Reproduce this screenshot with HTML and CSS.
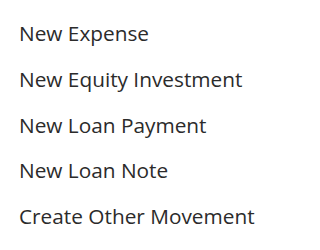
FILE: index.html
```html
<!DOCTYPE html>
<html>
<head>
<meta charset="utf-8">
<link rel="stylesheet" href="styles.css">
</head>
<body>
<ul class="menu">
  <li class="menu-item">New Expense</li>
  <li class="menu-item">New Equity Investment</li>
  <li class="menu-item">New Loan Payment</li>
  <li class="menu-item">New Loan Note</li>
  <li class="menu-item">Create Other Movement</li>
</ul>
</body>
</html>
```
FILE: styles.css
```css
html, body {
  margin: 0;
  padding: 0;
  background: #fff;
}
.menu {
  list-style: none;
  margin: 0;
  padding: 11px 0 0 19px;
  font-family: "Open Sans", sans-serif;
  font-size: 20.8px;
  color: #2b2b2b;
}
.menu-item {
  height: 45.8px;
  line-height: 45.8px;
  white-space: nowrap;
}
```
